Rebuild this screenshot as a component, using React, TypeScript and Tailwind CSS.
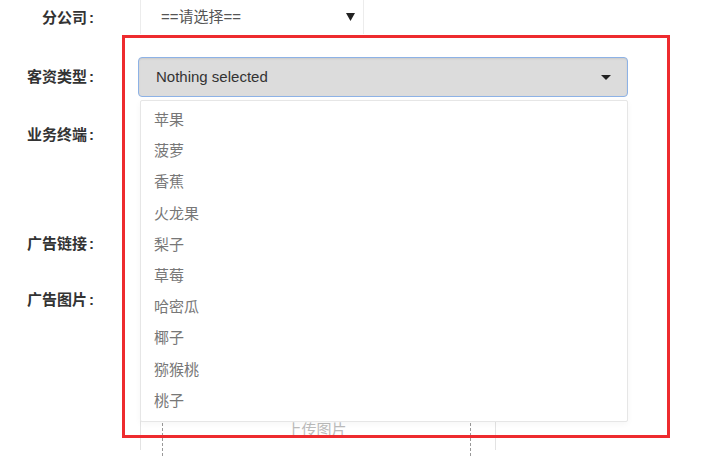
const fruits = ['苹果', '菠萝', '香蕉', '火龙果', '梨子', '草莓', '哈密瓜', '椰子', '猕猴桃', '桃子'];

const Label = ({ text, className = '' }: { text: string; className?: string }) => (
  <div className={`w-[94px] shrink-0 text-right text-[15px] font-bold text-[#333] ${className}`}>
    {text}
    <span className="ml-[2px]">:</span>
  </div>
);

const Caret = ({ w = 9, h = 5 }: { w?: number; h?: number }) => (
  <svg width={w} height={h} viewBox={`0 0 ${w} ${h}`}>
    <polygon points={`0,0 ${w},0 ${w / 2},${h}`} fill="#222" />
  </svg>
);

export default function App() {
  return (
    <div className="relative w-[705px] h-[470px] overflow-hidden bg-white font-['Liberation_Sans','Noto_Sans_CJK_SC',sans-serif]">
      {/* form */}
      <div className="flex flex-col">
        {/* 分公司 */}
        <div className="flex h-[34px] items-center">
          <Label text="分公司" className="leading-[20px] pt-[2px]" />
          <div className="ml-[46px] flex h-full w-[224px] items-center justify-between border-x border-[#ececec] pl-[20px] pr-[8px] text-[15px] text-[#555]">
            <span>==请选择==</span>
            <Caret w={9} h={8} />
          </div>
        </div>

        {/* 客资类型 */}
        <div className="mt-[23px] flex h-[40px] items-center">
          <Label text="客资类型" className="leading-[20px]" />
          <div className="ml-[44px] flex h-full w-[490px] items-center justify-between rounded-[4px] border border-[#8db2e6] bg-[#dcdcdc] pl-[17px] pr-[16px] text-[15px] text-[#333] shadow-[inset_0_1px_2px_rgba(0,0,0,0.08)]">
            <span>Nothing selected</span>
            <Caret w={10} h={5} />
          </div>
        </div>

        {/* 业务终端 */}
        <div className="flex h-[130px] pt-[28px]">
          <Label text="业务终端" className="leading-[20px]" />
        </div>

        {/* 广告链接 */}
        <div className="flex h-[34px] items-center">
          <Label text="广告链接" className="leading-[20px]" />
          <div className="ml-[46px] h-full w-[356px] border border-[#e5e5e5]" />
        </div>

        {/* 广告图片 */}
        <div className="mt-[22px] flex">
          <Label text="广告图片" className="leading-[34px]" />
          <div className="ml-[46px] h-[167px] w-[356px] border-x border-[#e3e3e3]">
            <div className="ml-[21px] mt-[10px] flex h-[163px] w-[309px] flex-col items-center justify-end border-x border-dashed border-[#999] pb-[16px]">
              <span className="text-[15px] leading-[20px] text-[#bbb]">上传图片</span>
            </div>
          </div>
        </div>
      </div>

      {/* open dropdown menu */}
      <ul className="absolute left-[140px] top-[100px] z-10 w-[488px] rounded-[2px] border border-[#e6e6e6] bg-white pt-[3px] pb-[5px] shadow-[0_2px_6px_rgba(0,0,0,0.04)]">
        {fruits.map((f) => (
          <li key={f} className="h-[31.2px] pl-[13px] text-[15px] leading-[31px] text-[#777]">
            {f}
          </li>
        ))}
      </ul>

      {/* annotation frame */}
      <div className="pointer-events-none absolute left-[122px] top-[35px] z-20 h-[403px] w-[548px] border-[3px] border-[#ee2b2f]" />
    </div>
  );
}
